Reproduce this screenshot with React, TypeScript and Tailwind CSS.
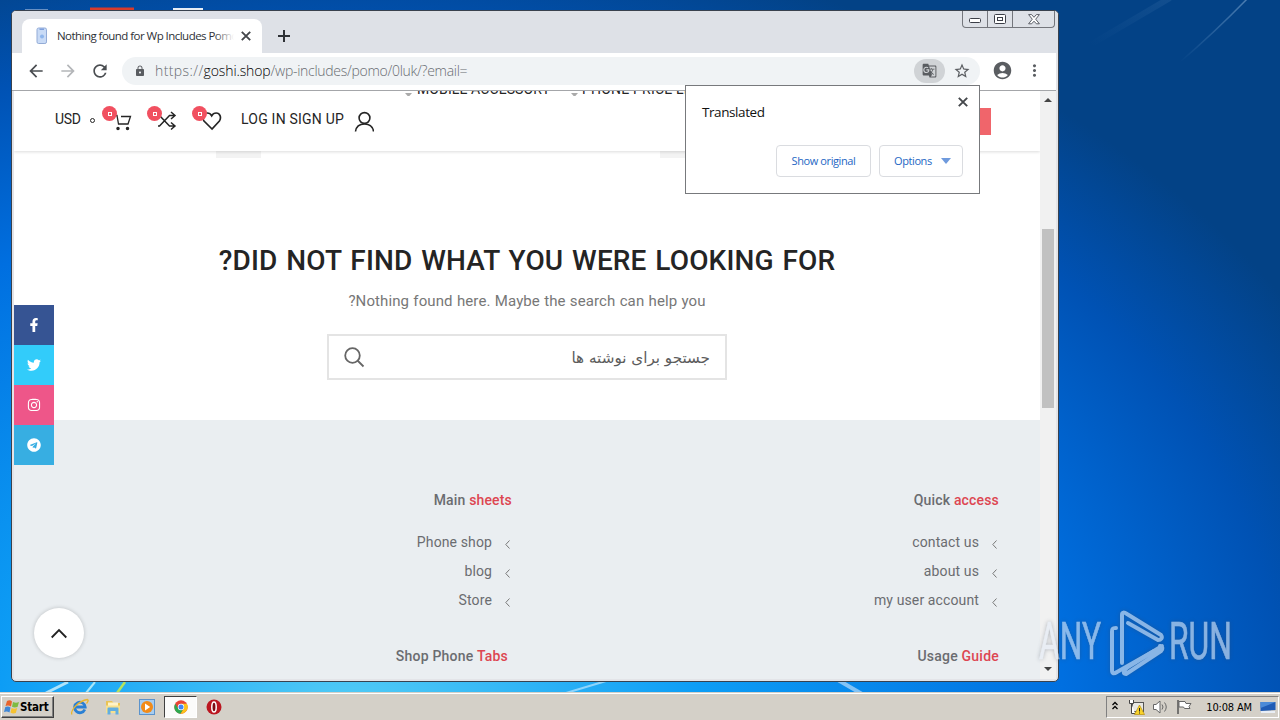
import {
  FaFacebookF,
  FaTwitter,
  FaInstagram,
  FaTelegram,
} from "react-icons/fa";
import {
  MdArrowBack,
  MdArrowForward,
  MdRefresh,
  MdLock,
  MdGTranslate,
  MdStarBorder,
  MdAccountCircle,
  MdMoreVert,
} from "react-icons/md";

const socials = [
  { name: "facebook", bg: "bg-[#365493]", Icon: FaFacebookF },
  { name: "twitter", bg: "bg-[#32ccfa]", Icon: FaTwitter },
  { name: "instagram", bg: "bg-[#ee5689]", Icon: FaInstagram },
  { name: "telegram", bg: "bg-[#37aee2]", Icon: FaTelegram },
];

function CloseIcon({ className }: any) {
  return (
    <svg width="10" height="10" className={className} stroke="#44474b" strokeWidth="1.9">
      <path d="m.8.800 8.400 8.400M9.200.800.800 9.200" />
    </svg>
  );
}

function WindowButtons() {
  return (
    <div className="flex h-[17px] w-[93px] rounded-b-[4px] border border-t-0 border-[#74767c]">
      <div className="flex w-[25px] items-center justify-center border-r border-[#74767c]">
        <svg width="13" height="6" className="mt-[4px]">
          <rect x="0.5" y="0.5" width="11" height="4" rx="1" fill="#fff" stroke="#3c3f48" />
        </svg>
      </div>
      <div className="flex w-[25px] items-center justify-center border-r border-[#74767c]">
        <svg width="12" height="11">
          <rect x="0.5" y="0.5" width="11" height="9" rx="1" fill="#fff" stroke="#3c3f48" />
          <rect x="3.5" y="3.5" width="5" height="3" fill="#fff" stroke="#3c3f48" />
        </svg>
      </div>
      <div className="flex flex-1 items-center justify-center">
        <svg width="12" height="11">
          <path
            d="M.6.6h3L6 3.3 8.4.6h3L7.7 5.2l3.7 4.6h-3L6 7.2 3.6 9.8h-3l3.7-4.6z"
            fill="#fff"
            stroke="#4c4f58"
            strokeWidth="0.9"
          />
        </svg>
      </div>
    </div>
  );
}

function TabStrip() {
  return (
    <div className="flex h-[42px] bg-[#dee1e7]">
      <div className="mt-[8px] ml-[10px] flex h-[34px] w-[240px] items-center rounded-t-[8px] bg-white">
        <svg width="12" height="18" className="ml-[14px]">
          <rect x="1" y="1" width="9.5" height="15.5" rx="1.6" fill="#c9dbf6" stroke="#93abd6" />
          <path d="M3.5 1.5h4.500v1.500H3.500z" fill="#7f9fdc" />
          <circle cx="6" cy="9.500" r="2" fill="#8fb6ec" />
        </svg>
        <div className="relative ml-[9px] w-[177px] overflow-hidden font-['Open_Sans'] text-[11.5px] leading-[18px] tracking-[-0.54px] whitespace-nowrap text-[#2e3136]">
          Nothing found for Wp Includes Pomo
          <span className="absolute inset-y-0 right-0 w-[20px] bg-linear-to-r from-transparent to-white" />
        </div>
        <CloseIcon className="ml-[7px]" />
      </div>
      <svg width="12" height="12" className="mt-[19px] ml-[16px]" stroke="#2e3136" strokeWidth="2">
        <path d="M6 0v12M0 6h12" />
      </svg>
      <div className="mr-[3px] ml-auto">
        <WindowButtons />
      </div>
    </div>
  );
}

function Toolbar() {
  return (
    <div className="flex h-[37px] items-center bg-white pb-[2px] text-[#5a5d61]">
      <MdArrowBack className="ml-[14px] h-5 w-5 text-[#4a4d51]" />
      <MdArrowForward className="ml-[12px] h-5 w-5 text-[#b4b6b9]" />
      <MdRefresh className="ml-[12px] h-5 w-5 text-[#4a4d51]" />
      <div className="ml-[12px] flex h-[28px] w-[858px] items-center rounded-full bg-[#f0f3f5]">
        <MdLock className="ml-[12px] h-[12px] w-[12px]" />
        <div className="ml-[9px] flex font-['Open_Sans'] text-[14px] leading-5 font-light whitespace-nowrap text-[#686c71]">
          <span className="tracking-[0.4px]">https://</span>
          <span className="tracking-[-0.11px] text-black">goshi.shop</span>
          <span className="tracking-[-0.28px]">/wp-includes/pomo/0luk/?email=</span>
        </div>
        <div className="ml-auto flex h-[24px] w-[31px] items-center justify-center rounded-full bg-[#d0d3d6]">
          <MdGTranslate className="h-[15px] w-[15px]" />
        </div>
        <MdStarBorder className="mr-[9px] ml-[8px] h-[18px] w-[18px]" />
      </div>
      <MdAccountCircle className="ml-[12px] h-[21px] w-[21px]" />
      <MdMoreVert className="ml-[12px] h-[19px] w-[19px]" />
    </div>
  );
}

function CountBadge() {
  return (
    <span className="absolute -top-[5px] -left-[11px] flex h-[15px] w-[15px] items-center justify-center rounded-full bg-[#f15060]">
      <span className="h-[4px] w-[4px] border border-white" />
    </span>
  );
}

function MenuArrow() {
  return (
    <svg width="7" height="4" className="mt-[11px] shrink-0">
      <path d="M0 0h7L3.500 4z" fill="#aaa" />
    </svg>
  );
}

function ShopHeader() {
  return (
    <div className="relative flex h-[60px] items-center bg-white font-[Roboto] text-[14px] text-[#252525] shadow-[0_1px_3px_rgba(0,0,0,0.14)]">
      <span className="-mt-[3px] ml-[41px] w-[26px] whitespace-nowrap tracking-[-0.3px]">USD</span>
      <span className="-mt-px ml-[9px] h-[5px] w-[5px] rounded-full border border-[#252525]" />
      <div className="relative ml-[18px] h-[20px] w-[20px]">
        <svg width="20" height="20" fill="none" stroke="#252525" strokeWidth="1.3">
          <path d="M.5 4.500h3.500l1.500 8.500h9.500l2.500-7.500H8" />
          <circle cx="5" cy="17.500" r="1.100" fill="#252525" />
          <circle cx="14.500" cy="17.500" r="1.100" fill="#252525" />
        </svg>
        <CountBadge />
      </div>
      <div className="relative ml-[25px] h-[20px] w-[20px]">
        <svg width="20" height="20" fill="none" stroke="#252525" strokeWidth="1.5">
          <path d="M-1 15h2.500L11.500 4.500h5.500M-1 4.500h2.500L11.500 15h5.500M13 1l4 3.500L13 8M13 11.500l4 3.500-4 3.500" />
        </svg>
        <CountBadge />
      </div>
      <div className="relative ml-[25px] h-[20px] w-[20px]">
        <svg width="20" height="20" fill="none" stroke="#252525" strokeWidth="1.7">
          <path d="M9 18 1 10C-1.300 6.500.5 2 4.200 2 6.700 2 8 3.500 8.700 4.800c.7-1.300 2-2.800 4.500-2.800 3.700 0 5.500 4.500 3.200 8z" />
        </svg>
        <CountBadge />
      </div>
      <span className="-mt-[3px] ml-[18px] w-[105px] tracking-[0.22px] whitespace-nowrap">LOG IN SIGN UP</span>
      <svg width="20" height="22" className="mt-[1px] ml-[8px]" fill="none" stroke="#252525" strokeWidth="1.6">
        <circle cx="10.500" cy="7" r="5.400" />
        <path d="M1.500 20.500c.6-4.500 4-7.500 9-7.500s8.400 3 9 7.500" />
      </svg>
      {/* menu row scrolled under the toolbar */}
      <div className="absolute top-0 left-[391px] h-[5px] w-[290px] overflow-hidden">
        <div className="-mt-[10px] flex items-center leading-[16px] whitespace-nowrap">
          <MenuArrow />
          <span className="ml-[5px] w-[135px] shrink-0 tracking-[0.1px]">MOBILE ACCESSORY</span>
          <span className="ml-[19px] shrink-0">
            <MenuArrow />
          </span>
          <span className="ml-[4px] tracking-[0.2px]">PHONE PRICE LIST</span>
        </div>
      </div>
      <span className="mr-[49px] ml-auto h-[27px] w-[80px] bg-[#f0656b]" />
    </div>
  );
}

function SearchSection() {
  return (
    <div className="flex h-[269px] flex-col items-center bg-white font-[Roboto]">
      <div className="flex h-[7px] w-full">
        <span className="ml-[202px] w-[45px] bg-[#f3f3f3]" />
        <span className="ml-[399px] w-[45px] bg-[#f3f3f3]" />
      </div>
      <h1 className="mt-[85px] text-[28px] leading-[36px] font-medium tracking-[0.14px] [word-spacing:1.7px] whitespace-nowrap text-[#242424]">
        ?DID NOT FIND WHAT YOU WERE LOOKING FOR
      </h1>
      <p className="mt-[12px] text-[15px] leading-5 tracking-[0.11px] [word-spacing:0.4px] whitespace-nowrap text-[#777]">
        ?Nothing found here. Maybe the search can help you
      </p>
      <div className="mt-[23px] flex h-[46px] w-[400px] items-center border-2 border-[#e4e4e4] px-[15px]">
        <svg width="21" height="21" fill="none" stroke="#666" strokeWidth="1.8">
          <circle cx="8.500" cy="8.500" r="7.300" />
          <path d="m13.500 13.500 6 6" />
        </svg>
        <span dir="rtl" className="mt-[3px] ml-auto font-['DejaVu_Sans'] text-[15.2px] leading-none text-[#5c5c5c]">
          جستجو برای نوشته ها
        </span>
      </div>
    </div>
  );
}

function LinkColumn({ first, second, links, nextFirst, nextSecond, shift }: any) {
  return (
    <div className="flex flex-col items-end font-[Roboto] text-[14px] leading-[20px] text-[#6a6c70]">
      <div className="font-medium tracking-[0.17px]">
        {first} <span className="text-[#dd4651]">{second}</span>
      </div>
      <div className="mt-[17px] flex flex-col items-end">
        {links.map((link: string) => (
          <div key={link} className="flex h-[29px] items-center tracking-[0.12px]">
            <span>{link}</span>
            <svg width="5" height="9" className="mt-[6px] mr-[2px] ml-[13px]" fill="none" stroke="#777" strokeWidth="1">
              <path d="M4.500.5.800 4.500l3.700 4" />
            </svg>
          </div>
        ))}
      </div>
      <div className={`mt-[32px] font-medium tracking-[0.22px] ${shift}`}>
        {nextFirst} <span className="text-[#dd4651]">{nextSecond}</span>
      </div>
    </div>
  );
}

function Footer() {
  return (
    <div className="flex h-[259px] bg-[#eaeef1] pt-[70px]">
      <div className="flex w-[498px] justify-end">
        <LinkColumn
          first="Main"
          second="sheets"
          links={["Phone shop", "blog", "Store"]}
          nextFirst="Shop Phone"
          nextSecond="Tabs"
          shift="mr-[4px]"
        />
      </div>
      <div className="flex w-[487px] justify-end">
        <LinkColumn
          first="Quick"
          second="access"
          links={["contact us", "about us", "my user account"]}
          nextFirst="Usage"
          nextSecond="Guide"
          shift="mr-0"
        />
      </div>
    </div>
  );
}

function Scrollbar() {
  return (
    <div className="flex w-[16px] flex-col items-center bg-[#f1f1f1]">
      <svg width="8" height="4" className="mt-[7px]">
        <path d="M0 4 4 0l4 4z" fill="#444" />
      </svg>
      <div className="mt-[127px] h-[179px] w-[12px] bg-[#c1c1c1]" />
      <svg width="8" height="4" className="mt-auto mb-[8px]">
        <path d="m0 0 4 4 4-4z" fill="#444" />
      </svg>
    </div>
  );
}

function TranslatePopup() {
  return (
    <div className="absolute top-[74px] left-[673px] flex h-[109px] w-[295px] flex-col border border-[#77797c] bg-white font-['Open_Sans']">
      <div className="flex pt-[8px] pr-[11px] pl-[16px]">
        <span className="mt-[9px] text-[13.5px] leading-[18px] tracking-[-0.42px] text-[#111]">Translated</span>
        <CloseIcon className="mt-[3px] ml-auto" />
      </div>
      <div className="mt-auto mr-[16px] mb-[16px] flex justify-end gap-2 text-[11px] tracking-[-0.4px] text-[#2467c4]">
        <div className="flex h-8 w-[95px] items-center justify-center rounded border border-[#dadce0]">Show original</div>
        <div className="flex h-8 w-[84px] items-center rounded border border-[#dadce0] pl-[14px]">
          Options
          <svg width="10" height="6" className="mr-[11px] ml-auto">
            <path d="M0 0h10L5 6z" fill="#6f9add" />
          </svg>
        </div>
      </div>
    </div>
  );
}

function BrowserWindow() {
  return (
    <div className="relative h-[672px] w-[1048px] rounded-[5px] border border-[#39424e] bg-[#e3e4e8]">
      <div className="overflow-hidden rounded-t-[4px]">
        <TabStrip />
      </div>
      <div className="mr-[2px] border-b border-[#a4a6a9]">
        <Toolbar />
      </div>
      <div className="mr-[2px] ml-[2px] flex h-[588px]">
        <div className="w-[1026px] overflow-hidden">
          <ShopHeader />
          <SearchSection />
          <Footer />
        </div>
        <Scrollbar />
      </div>
      {/* floating share bar */}
      <div className="absolute top-[294px] left-[2px] flex flex-col">
        {socials.map(({ name, bg, Icon }) => (
          <div key={name} className={`flex h-10 w-10 items-center justify-center ${bg}`}>
            <Icon className="h-[14px] w-[14px] text-white" />
          </div>
        ))}
      </div>
      <div className="absolute top-[597px] left-[22px] flex h-[50px] w-[50px] items-center justify-center rounded-full bg-white shadow-[0_0_4px_rgba(0,0,0,0.2)]">
        <svg width="16" height="11" fill="none" stroke="#222" strokeWidth="1.8">
          <path d="m.7 9.500 7.300-7.500 7.300 7.500" />
        </svg>
      </div>
      <TranslatePopup />
    </div>
  );
}

function Watermark() {
  return (
    <svg
      className="absolute top-[605px] left-[1034px]"
      width="204"
      height="72"
      fill="none"
      opacity="0.6"
      style={{ filter: "drop-shadow(0 0 2px rgba(60,70,90,0.6))" }}
    >
      <g fill="#e4ecf6" stroke="#e4ecf6" strokeWidth="0.6" fontFamily="Roboto" fontSize="51">
        <text x="5" y="54" textLength="62" lengthAdjust="spacingAndGlyphs">ANY</text>
        <text x="135" y="54" textLength="63" lengthAdjust="spacingAndGlyphs">RUN</text>
      </g>
      <g stroke="#e4ecf6" strokeWidth="4" strokeLinejoin="round" strokeLinecap="round">
        <path d="M82 23c-4 0-4 1-4 4v38c0 4 2 4 5 2l37-21" />
        <path d="M128 41 94 62c-4 3-6 7-2 7l35-23c2-2 2-4-1-5" />
        <path d="M88 58V10c0-3 2-3 5-1l34 21c2 3 0 5-3 5L94 18" />
      </g>
    </svg>
  );
}

function Taskbar() {
  return (
    <div className="relative flex h-[28px] border-t border-[#d4d0c8] bg-[#d4d0c8] shadow-[inset_0_1px_0_#fff]">
      <div className="mt-[3px] ml-[1px] flex h-[22px] w-[53px] items-center border border-t-white border-r-[#404040] border-b-[#404040] border-l-white pl-[2px] shadow-[inset_-1px_-1px_0_#808080]">
        <svg width="16" height="16" viewBox="0 0 16 16">
          <path d="M3 2q3-1.500 5 .5L7 7.500Q4.500 6 1.500 7z" fill="#e8632b" />
          <path d="M9 3q3 1.500 6 0l-1.500 5Q10.500 9 8 7.800z" fill="#7ebb42" />
          <path d="M1.300 8q3-1 5.200.5l-1 5Q3 12 0 13z" fill="#3f87d6" />
          <path d="M7.600 9q2.500 1.500 5.600 0l-1.400 5q-3 1-5.300-.5z" fill="#f6c231" />
        </svg>
        <span className="mt-[2px] font-['DejaVu_Sans_Condensed'] text-[11.500px] leading-none font-bold tracking-[-0.2px] text-black">
          Start
        </span>
      </div>
      <div className="mt-[2px] ml-[17px] flex h-[24px] items-center">
        <svg width="18" height="18" viewBox="0 0 18 18">
          <path d="M13.800 11.500A5.300 5.300 0 1 1 14.200 9H5" fill="none" stroke="#2a80d4" strokeWidth="2.800" />
          <path d="M1 16.500C-1 13 7 3 16.500 1.500c1.500.5 0 3-1 4" fill="none" stroke="#e9b62e" strokeWidth="1.300" />
        </svg>
        <svg width="18" height="18" viewBox="0 0 18 18" className="ml-[15px]">
          <path d="M2 3h6l1.500 2H16v10H2z" fill="#e9c355" />
          <path d="M4 4.500h10V8H4z" fill="#fff3c6" />
          <path d="M2 7.500h14V15H2z" fill="#f7e08f" />
          <path d="M3.500 16.500v-6q0-1 1-1h9q1 0 1 1v6h-3V13h-5v3.500z" fill="#62aee0" />
        </svg>
        <svg width="18" height="18" viewBox="0 0 18 18" className="ml-[16px]">
          <rect x="1.500" y="1.500" width="15" height="15" fill="#a7cdf0" stroke="#5b93cc" />
          <circle cx="9" cy="9" r="6" fill="#f28b18" />
          <path d="M7 5.500 12.200 9 7 12.500z" fill="#fff" />
        </svg>
        <div className="ml-[8px] flex h-[22px] w-[33px] items-center justify-center border border-t-[#404040] border-r-white border-b-white border-l-[#404040] bg-[#fbfbfa]">
          <svg width="14" height="14" viewBox="0 0 14 14">
            <circle cx="7" cy="7" r="6.700" fill="#e94435" />
            <path d="M1.200 3.700A6.700 6.700 0 0 0 6.600 13.700L9.800 8.500 7 7 4.200 8.600z" fill="#2da94f" />
            <path d="M7 3.800h5.900A6.700 6.700 0 0 1 6.600 13.700L9.800 8.500z" fill="#fdc31a" />
            <circle cx="7" cy="7" r="3.200" fill="#fff" />
            <circle cx="7" cy="7" r="2.500" fill="#4285f4" />
          </svg>
        </div>
        <svg width="16" height="16" viewBox="0 0 16 16" className="ml-[9px]">
          <circle cx="8" cy="8" r="7.500" fill="#bb1620" />
          <ellipse cx="8" cy="8" rx="2.200" ry="5" fill="#7d0b12" stroke="#fff" strokeWidth="1.500" />
        </svg>
      </div>
      <div className="mt-[3px] mr-px ml-auto flex h-[22px] w-[173px] items-center border border-t-[#808080] border-r-white border-b-white border-l-[#808080]">
        <svg width="6" height="9" className="mb-[3px] ml-[5px]" fill="none" stroke="#000" strokeWidth="1.300">
          <path d="m.5 4 2.500-2.500L5.500 4M.5 8 3 5.500 5.500 8" />
        </svg>
        <svg width="17" height="16" viewBox="0 0 17 16" className="ml-[10px]">
          <rect x="4.500" y="3.500" width="11" height="9" fill="#e8e8e4" stroke="#555" />
          <path d="M1.500 1v3.500h4V1M3.500 4.500V14.500H7" fill="#fff" stroke="#444" />
          <path d="m11.500 6 5 9.500h-10z" fill="#f8d22b" stroke="#b98f0c" strokeWidth=".7" />
          <path d="M11.500 9v3.500M11.500 13.500v1" stroke="#222" />
        </svg>
        <svg width="17" height="16" viewBox="0 0 17 16" className="ml-[7px]" fill="none" stroke="#666">
          <path d="M1.500 5.500H4L8 2v12l-4-3.500H1.500z" fill="#fff" />
          <path d="M10 5.500q2 2.500 0 5M12.500 3.500q3.500 4.500 0 9" />
        </svg>
        <svg width="16" height="16" viewBox="0 0 16 16" className="ml-[7px]">
          <path d="M2 1v14" stroke="#555" strokeWidth="1.500" />
          <path d="M3 2.500h6l1 2h5l-2 3 1 2H8.500l-1-1.500H3z" fill="#fff" stroke="#666" />
        </svg>
        <span className="ml-auto font-['DejaVu_Sans_Condensed'] text-[11px] leading-none tracking-[-0.15px] whitespace-nowrap text-black">
          10:08 AM
        </span>
        <svg width="16" height="14" className="mr-[2px] ml-[8px]">
          <path d="M.5 2h15v8L.5 11z" fill="#1f5bb5" />
          <path d="M.5 2h15L.5 8z" fill="#4b8ad8" />
          <path d="M1 12h14" stroke="#e9eef5" strokeWidth="2" />
        </svg>
      </div>
    </div>
  );
}

export default function App() {
  return (
    <div className="relative flex h-[720px] w-[1280px] flex-col overflow-hidden bg-[radial-gradient(ellipse_1100px_800px_at_350px_720px,#55cdf5_0%,#0d9df5_32%,#006fe0_65%,#0052b4_85%,#034286_100%)]">
      {/* wallpaper light streaks and the icons hidden behind the window */}
      <svg className="absolute inset-0" width="1280" height="720" fill="none">
        <defs>
          <linearGradient id="ray" x1="0" y1="1" x2="1" y2="0">
            <stop offset="0" stopColor="#5f8fc0" stopOpacity="0" />
            <stop offset="1" stopColor="#6f9ac6" stopOpacity="0.7" />
          </linearGradient>
        </defs>
        <path d="M1180 62q35-30 68-64" stroke="url(#ray)" strokeWidth="1.500" />
        <path d="M1090 45 1170 -2" stroke="url(#ray)" strokeWidth="6" opacity="0.2" />
        <path d="m46 693 22-11" stroke="#d5f2fc" strokeWidth="3" opacity="0.8" />
        <path d="m86 693 9-11" stroke="#a8e6f8" strokeWidth="2" />
        <path d="m117 693 8-11" stroke="#b6e35c" strokeWidth="2.500" />
        <path d="m566 693 40-12" stroke="#8ed4fb" strokeWidth="2" />
        <path d="m838 680 24 14" stroke="#b8dcfa" strokeWidth="4" opacity="0.7" />
        <path d="M90 9h44" stroke="#d93b2b" strokeWidth="3" />
        <path d="M173 9h30" stroke="#e6edf5" strokeWidth="2" />
        <path d="M25 10h23" stroke="#8ba9d0" strokeWidth="1.500" />
      </svg>
      <div className="relative h-[692px] pt-[10px] pl-[11px]">
        <BrowserWindow />
      </div>
      <Taskbar />
      <Watermark />
    </div>
  );
}
